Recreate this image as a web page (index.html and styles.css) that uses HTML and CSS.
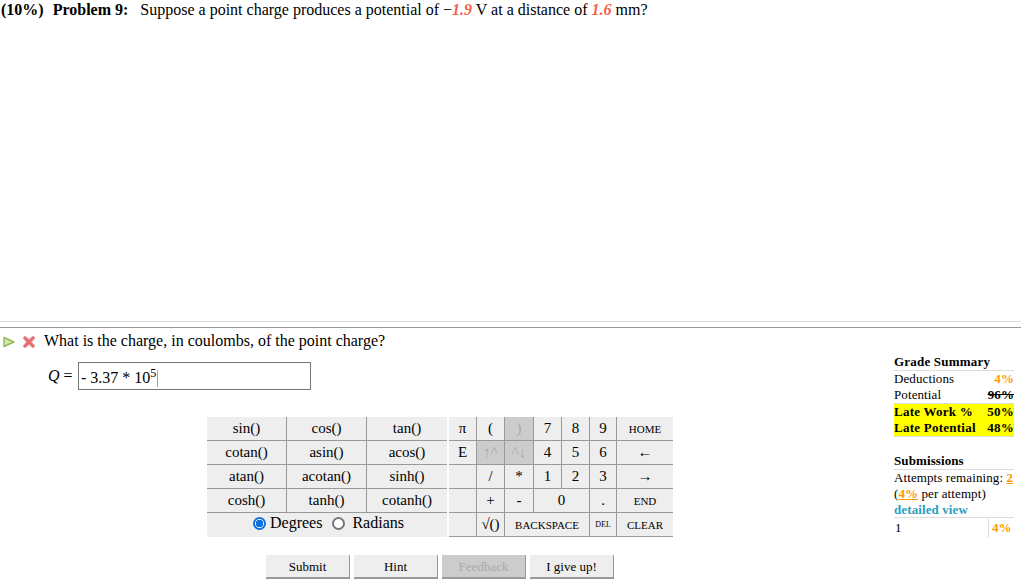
FILE: index.html
```html
<!DOCTYPE html>
<html lang="en">
<head>
<meta charset="utf-8">
<title>Problem 9</title>
<link rel="stylesheet" href="styles.css">
</head>
<body>
<header class="problem">
  <b class="pct">(10%)</b><b class="num">Problem 9:</b><span class="stmt">Suppose a point charge produces a potential of −<i class="var">1.9</i> V at a distance of <i class="var">1.6</i> mm?</span>
</header>
<hr class="rule-light">
<hr class="rule-dark">
<main class="part">
  <section class="work">
    <div class="question">
      <svg class="ico-play" width="12" height="12" viewBox="0 0 12 12"><path d="M1 1.5 L11 6 L1 10.5 Z" fill="#d3e8a0" stroke="#93b860" stroke-width="1.4" stroke-linejoin="round"/></svg>
      <svg class="ico-x" width="14" height="14" viewBox="0 0 14 14"><path d="M3 1 L7 4.5 L11 1 L13 3 L9.5 7 L13 11 L11 13 L7 9.5 L3 13 L1 11 L4.5 7 L1 3 Z" fill="#ee6a6a" stroke="#d9a8a8" stroke-width="1"/></svg>
      <span>What is the charge, in coulombs, of the point charge?</span>
    </div>
    <div class="answer">
      <span class="label"><i>Q</i> =</span>
      <div class="input">- 3.37 * 10<sup>5</sup><span class="caret"></span></div>
    </div>
    <div class="keypad">
      <div class="funcs">
        <div class="grid-f">
          <div>sin()</div><div>cos()</div><div>tan()</div>
          <div>cotan()</div><div>asin()</div><div>acos()</div>
          <div>atan()</div><div>acotan()</div><div>sinh()</div>
          <div>cosh()</div><div>tanh()</div><div>cotanh()</div>
        </div>
        <div class="units">
          <span class="radio on"></span><span class="deg">Degrees</span>
          <span class="radio"></span><span class="rad">Radians</span>
        </div>
      </div>
      <div class="grid-n">
        <div>π</div><div>(</div><div class="off">)</div><div>7</div><div>8</div><div>9</div><div class="sm">HOME</div>
        <div>E</div><div class="off">↑^</div><div class="off">^↓</div><div>4</div><div>5</div><div>6</div><div>←</div>
        <div></div><div>/</div><div>*</div><div>1</div><div>2</div><div>3</div><div>→</div>
        <div></div><div>+</div><div>-</div><div class="w2">0</div><div>.</div><div class="sm">END</div>
        <div></div><div>√()</div><div class="w3 sm">BACKSPACE</div><div class="xs">DEL</div><div class="sm">CLEAR</div>
      </div>
    </div>
    <div class="actions">
      <div class="btn">Submit</div>
      <div class="btn">Hint</div>
      <div class="btn off">Feedback</div>
      <div class="btn">I give up!</div>
    </div>
  </section>
  <aside class="side">
    <h4 class="side-h">Grade Summary</h4>
    <div class="row"><span>Deductions</span><span class="orange">4%</span></div>
    <div class="row line"><span>Potential</span><s class="bold">96%</s></div>
    <div class="late">
      <div class="row"><span>Late Work %</span><span>50%</span></div>
      <div class="row"><span>Late Potential</span><span>48%</span></div>
    </div>
    <h4 class="side-h sub">Submissions</h4>
    <div class="plain">Attempts remaining: <u class="orange">2</u></div>
    <div class="plain">(<u class="orange">4%</u> per attempt)</div>
    <div class="plain link">detailed view</div>
    <div class="log"><span>1</span><span class="orange">4%</span></div>
  </aside>
</main>
</body>
</html>
```
FILE: styles.css
```css
html, body { margin: 0; padding: 0; }
body {
  width: 1021px;
  height: 579px;
  overflow: hidden;
  background: #fff;
  color: #000;
  font-family: "Liberation Serif", "Times New Roman", serif;
}
.problem {
  height: 321px;
  box-sizing: border-box;
  padding: 1px 0 0 1px;
  font-size: 16px;
  line-height: 18px;
  white-space: nowrap;
}
.pct { margin-right: 9px; }
.num { margin-right: 12px; }
.var { color: #f4614a; font-weight: bold; }
.rule-light, .rule-dark { margin: 0; border: 0; height: 1px; }
.rule-light { background: #ddd; margin-bottom: 5px; }
.rule-dark { background: #999; }
.part { display: flex; height: 251px; }
.work { width: 894px; flex: none; }
.question {
  display: flex;
  align-items: center;
  height: 26px;
  font-size: 16px;
  padding-left: 3px;
}
.ico-play { margin-right: 7px; margin-top: 2px; }
.ico-x { margin-right: 8px; margin-top: 2px; }
.answer { display: flex; align-items: center; height: 28px; margin-top: 8px; padding-left: 48px; font-size: 16px; }
.label { width: 31px; flex: none; white-space: nowrap; }
.input {
  box-sizing: border-box;
  width: 233px;
  height: 28px;
  margin-left: -1px;
  border: 1px solid #777;
  padding: 2px 0 0 2px;
  font-size: 16px;
  line-height: 26px;
  white-space: nowrap;
}
.input sup { font-size: 12px; line-height: 0; vertical-align: 6px; }
.caret { display: inline-block; width: 1px; height: 17px; background: #e88; vertical-align: -4px; margin-left: 1px; }
.keypad { display: flex; gap: 2px; margin: 27px 0 0 207px; font-size: 15px; }
.funcs { width: 240px; background: #eee; }
.grid-f {
  display: grid;
  grid-template-columns: 79px 79px 80px;
  grid-auto-rows: 23px;
  gap: 1px;
  background: #999;
  border-bottom: 1px solid #999;
}
.grid-f > div, .grid-n > div {
  background: #eee;
  display: flex;
  align-items: center;
  justify-content: center;
  box-sizing: border-box;
}
.units { height: 24px; display: flex; align-items: center; justify-content: center; padding: 0 0 4px 3px; box-sizing: border-box; font-size: 16px; }
.radio {
  box-sizing: border-box;
  width: 13px;
  height: 13px;
  border-radius: 50%;
  background: #fff;
  border: 2px solid #777;
}
.radio.on { border-color: #0a6fe0; background: radial-gradient(circle, #0a6fe0 3.5px, #fff 4px); margin-right: 4px; }
.deg { margin-right: 10px; }
.rad { margin-left: 7px; }
.grid-n {
  width: 224px;
  display: grid;
  grid-template-columns: 27px 27px 28px 27px 27px 26px 56px;
  grid-auto-rows: 23px;
  gap: 1px;
  background: #999;
  border-bottom: 1px solid #999;
}
.grid-n .off { background: #ccc; color: #aaa; }
.grid-n .sm { font-size: 11px; }
.grid-n .xs { font-size: 8px; }
.w2 { grid-column: span 2; }
.w3 { grid-column: span 3; }
.actions { display: flex; gap: 4px; margin: 18px 0 0 266px; font-size: 13px; }
.btn {
  box-sizing: border-box;
  width: 84px;
  height: 24px;
  padding-top: 1px;
  background: #eee;
  border-right: 1px solid #999;
  border-bottom: 2px solid #999;
  display: flex;
  align-items: center;
  justify-content: center;
}
.btn.off { background: #ccc; color: #aaa; }
.side { width: 120px; padding-top: 26px; font-size: 13px; line-height: 16px; letter-spacing: .1px; }
.side-h { margin: 0; padding-bottom: 1px; font-size: 13px; line-height: 15px; border-bottom: 1px solid #ddd; letter-spacing: .2px; white-space: nowrap; }
.side-h.sub { margin-top: 16px; letter-spacing: .1px; }
.row { display: flex; justify-content: space-between; white-space: nowrap; }
.row.line { border-bottom: 1px solid #ddd; }
.orange { color: #f90; font-weight: bold; }
.bold { font-weight: bold; }
.late { background: #ff0; font-weight: bold; border-bottom: 1px solid #ddd; letter-spacing: .25px; }
.plain { white-space: nowrap; line-height: 16px; }
.link { color: #2a9dbf; font-weight: bold; line-height: 15px; border-bottom: 1px solid #ddd; }
.log { display: flex; height: 20px; align-items: center; }
.log span:first-child { width: 95px; box-sizing: border-box; border-right: 1px solid #ddd; height: 20px; line-height: 20px; padding-left: 1px; }
.log span:last-child { padding-left: 3px; }
```
